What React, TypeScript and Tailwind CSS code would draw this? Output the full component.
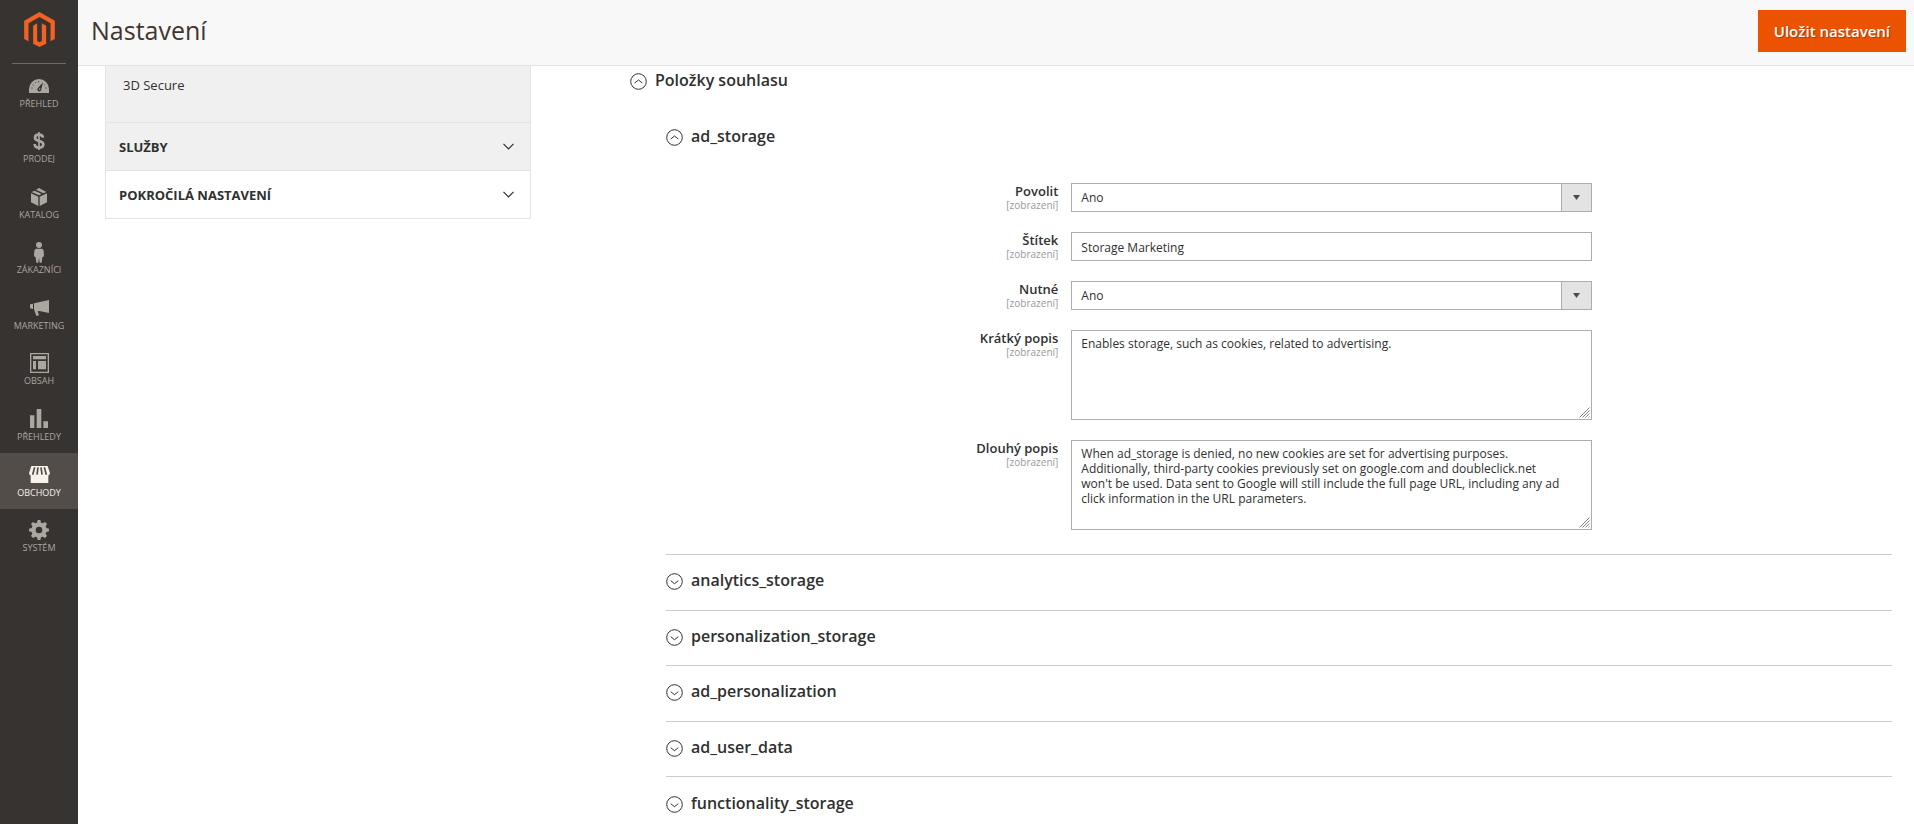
import React from "react";
import clsx from "clsx";

type MenuItem = {
  label: string;
  icon: React.ReactNode;
  active?: boolean;
};

const menu: MenuItem[] = [
  { label: "PŘEHLED", icon: <DashboardIcon /> },
  { label: "PRODEJ", icon: <DollarIcon /> },
  { label: "KATALOG", icon: <BoxIcon /> },
  { label: "ZÁKAZNÍCI", icon: <PersonIcon /> },
  { label: "MARKETING", icon: <MegaphoneIcon /> },
  { label: "OBSAH", icon: <LayoutIcon /> },
  { label: "PŘEHLEDY", icon: <BarsIcon /> },
  { label: "OBCHODY", icon: <StoreIcon />, active: true },
  { label: "SYSTÉM", icon: <GearIcon /> },
];

const closedSections = [
  "analytics_storage",
  "personalization_storage",
  "ad_personalization",
  "ad_user_data",
  "functionality_storage",
];

const longText = `When ad_storage is denied, no new cookies are set for advertising purposes.
Additionally, third-party cookies previously set on google.com and doubleclick.net
won't be used. Data sent to Google will still include the full page URL, including any ad
click information in the URL parameters.`;

const App = () => {
  return (
    <div className="flex h-screen overflow-hidden bg-white font-['Open_Sans',sans-serif] text-[#303030]">
      <Sidebar />
      <div className="flex min-w-0 flex-1 flex-col">
        <header className="flex h-[66px] shrink-0 items-center justify-between border-b border-[#e3e3e3] bg-[#f8f8f8] pr-2 pl-[13px]">
          <h1 className="pb-[6px] text-[25px] leading-8 text-[#41362f]">
            Nastavení
          </h1>
          <button
            type="button"
            className="mb-[3px] h-[42px] bg-[#eb5202] px-4 text-[15px] font-semibold text-white [text-shadow:1px_1px_0_rgba(0,0,0,0.25)]"
          >
            Uložit nastavení
          </button>
        </header>
        <div className="flex flex-1 items-start overflow-hidden pr-[22px] pl-[27px]">
          <ConfigNav />
          <Settings />
        </div>
      </div>
    </div>
  );
};

export default App;

const Sidebar = () => {
  return (
    <aside className="w-[78px] shrink-0 bg-[#373330]">
      <a
        href="#"
        aria-label="Magento"
        className="mx-3 flex h-16 justify-center border-b border-[#736963] pt-3"
      >
        <MagentoLogo />
      </a>
      <nav>
        <ul className="flex h-[500px] flex-col text-[9px] leading-3">
          {menu.map((item) => (
            <li key={item.label} className="flex-1">
              <a
                href="#"
                className={clsx(
                  "flex h-full flex-col items-center justify-end pb-[10px]",
                  item.active
                    ? "bg-[#524d49] text-[#f7f3eb]"
                    : "text-[#aaa6a0]"
                )}
              >
                <span className="flex h-6 items-center">{item.icon}</span>
                <span>{item.label}</span>
              </a>
            </li>
          ))}
        </ul>
      </nav>
    </aside>
  );
};

const ConfigNav = () => {
  return (
    <nav className="w-[426px] shrink-0 border-x border-b border-[#e3e3e3] text-[13px] leading-5">
      <div className="h-14 bg-[#f0f0f0] pt-[9px] pl-[17px]">
        <a href="#">3D Secure</a>
      </div>
      <NavGroup label="SLUŽBY" className="bg-[#f0f0f0]" />
      <NavGroup label="POKROČILÁ NASTAVENÍ" />
    </nav>
  );
};

const NavGroup = ({
  label,
  className,
}: {
  label: string;
  className?: string;
}) => {
  return (
    <button
      type="button"
      className={clsx(
        "flex h-12 w-full items-center justify-between border-t border-[#e3e3e3] pr-4 pl-[13px] font-bold",
        className
      )}
    >
      {label}
      <svg width="11" height="7" viewBox="0 0 11 7" fill="none">
        <path d="M.5 .8 5.5 5.8 10.5 .8" stroke="#303030" strokeWidth="1.2" />
      </svg>
    </button>
  );
};

const Settings = () => {
  return (
    <main className="ml-[99px] min-w-0 flex-1">
      <SectionTitle label="Položky souhlasu" open className="h-8" />
      <div className="pl-9">
        <SectionTitle label="ad_storage" open className="mt-6 h-8" />
        <form className="mt-[29px] mb-6 flex flex-col gap-5">
          <Field id="enabled" label="Povolit">
            <Select id="enabled" />
          </Field>
          <Field id="label" label="Štítek">
            <input
              id="label"
              type="text"
              defaultValue="Storage Marketing"
              className="block h-[29px] w-full border border-[#adadad] px-[9px] pt-px outline-none"
            />
          </Field>
          <Field id="required" label="Nutné">
            <Select id="required" />
          </Field>
          <Field id="short" label="Krátký popis">
            <TextArea
              id="short"
              text="Enables storage, such as cookies, related to advertising."
            />
          </Field>
          <Field id="long" label="Dlouhý popis">
            <TextArea id="long" text={longText} />
          </Field>
        </form>
        <div className="flex h-[278px] flex-col">
          {closedSections.map((label) => (
            <SectionTitle
              key={label}
              label={label}
              className="flex-1 border-t border-[#cccccc]"
            />
          ))}
        </div>
      </div>
    </main>
  );
};

const SectionTitle = ({
  label,
  open,
  className,
}: {
  label: string;
  open?: boolean;
  className?: string;
}) => {
  return (
    <h2 className={className}>
      <button
        type="button"
        aria-expanded={!!open}
        className="flex h-full w-full items-center gap-2 pb-1 text-base font-semibold"
      >
        <svg
          width="17"
          height="17"
          viewBox="0 0 17 17"
          fill="none"
          stroke="#303030"
          className="mt-[3px]"
        >
          <circle cx="8.5" cy="8.5" r="7.8" />
          <path
            d={open ? "M4.7 10 8.5 7 12.3 10" : "M4.7 7.7 8.5 10.7 12.3 7.7"}
          />
        </svg>
        {label}
      </button>
    </h2>
  );
};

const Field = ({
  id,
  label,
  children,
}: {
  id: string;
  label: string;
  children: React.ReactNode;
}) => {
  return (
    <div className="flex items-start">
      <label
        htmlFor={id}
        className="w-[32%] shrink-0 text-right text-[13px] leading-4 font-semibold"
      >
        {label}
        <span className="block text-[10px] leading-3 font-normal text-[#999999]">
          [zobrazení]
        </span>
      </label>
      <div className="relative ml-[13px] w-[42.5%] text-xs">{children}</div>
    </div>
  );
};

const Select = ({ id }: { id: string }) => {
  return (
    <>
      <select
        id={id}
        defaultValue="1"
        className="block h-[29px] w-full appearance-none border border-[#adadad] bg-white px-[9px] pt-px outline-none"
      >
        <option value="1">Ano</option>
        <option value="0">Ne</option>
      </select>
      <span className="pointer-events-none absolute inset-y-0 right-0 flex w-[31px] items-center justify-center border border-[#adadad] bg-[#e3e3e3]">
        <svg width="7" height="5" viewBox="0 0 7 5" fill="#514943">
          <path d="M0 0H7L3.5 5Z" />
        </svg>
      </span>
    </>
  );
};

const TextArea = ({ id, text }: { id: string; text: string }) => {
  return (
    <>
      <textarea
        id={id}
        defaultValue={text}
        className="block h-[90px] w-full resize-none overflow-hidden border border-[#adadad] px-[9px] py-[5px] leading-[15px] outline-none"
      />
      <svg
        width="11"
        height="11"
        viewBox="0 0 11 11"
        stroke="#808080"
        strokeWidth="1"
        className="pointer-events-none absolute right-[2px] bottom-[2px]"
      >
        <path d="M.5 10.5 10.5 .5M3.5 10.5 10.5 3.5M6.5 10.5 10.5 6.5M9.5 10.5 10.5 9.5" />
      </svg>
    </>
  );
};

function MagentoLogo() {
  return (
    <svg width="31" height="35" viewBox="0 0 92 105" fill="#f26322">
      <path d="M46 0 92 26V81L79 88V34L46 15 13 34V88L0 81V26Z" />
      <path d="M27 41 39 34V87L46 91 53 87V34L66 41V95L46 105 27 95Z" />
    </svg>
  );
}

function DashboardIcon() {
  return (
    <svg width="20" height="14" viewBox="0 0 60 42" fill="none">
      <path d="M0 42V30a30 30 0 0 1 60 0V42Z" fill="#aaa6a0" />
      <path
        d="M7 27h4M11 17l3 2M19 9l2 3M29 6v4M49 27h4M48 17l-2 1"
        stroke="#373330"
        strokeWidth="2.5"
      />
      <path d="M42 10 37 31a6 6 0 1 1-10-4Z" fill="#373330" />
      <circle cx="32" cy="30" r="2.5" fill="#aaa6a0" />
    </svg>
  );
}

function DollarIcon() {
  return (
    <svg width="12" height="18" viewBox="0 0 34 54" fill="none" stroke="#aaa6a0">
      <path
        d="M29 17C28 10 23 8 17 8 10 8 5 11 5 17c0 13 25 7 25 20 0 7-6 10-13 10S4 44 4 36"
        strokeWidth="8"
      />
      <path d="M17 0V54" strokeWidth="5" />
    </svg>
  );
}

function BoxIcon() {
  return (
    <svg width="16" height="18" viewBox="0 0 48 54" fill="#aaa6a0">
      <path d="M0 16 22 26V54L0 43ZM48 16V43L26 54V26Z" />
      <path d="M2 12 11 8 32 18 24 22ZM15 5 24 0 46 12 37 16Z" />
    </svg>
  );
}

function PersonIcon() {
  return (
    <svg width="10" height="21" viewBox="0 0 30 63" fill="#aaa6a0">
      <circle cx="15" cy="9" r="9" />
      <path d="M7 20H23Q28 20 29 27L30 43 25 46 23 62H17L15 47 13 62H7L5 46 0 43 1 27Q2 20 7 20Z" />
    </svg>
  );
}

function MegaphoneIcon() {
  return (
    <svg width="19" height="16" viewBox="0 0 57 48" fill="#aaa6a0">
      <path d="M0 13 9 11V27L0 25ZM12 10 57 0V39L28 33 23 34 27 46 19 48 12 28Z" />
    </svg>
  );
}

function LayoutIcon() {
  return (
    <svg width="19" height="20" viewBox="0 0 57 60" fill="#aaa6a0">
      <path d="M0 0H57V60H0ZM4 4V56H53V4Z" fillRule="evenodd" />
      <path d="M9 9H48V19H9ZM9 24H18V49H9ZM24 24H48V49H24Z" />
    </svg>
  );
}

function BarsIcon() {
  return (
    <svg width="18" height="19" viewBox="0 0 54 57" fill="#aaa6a0">
      <path d="M0 19H13V57H0ZM20 0H34V57H20ZM40 37H54V57H40Z" />
    </svg>
  );
}

function StoreIcon() {
  return (
    <svg width="21" height="17" viewBox="0 0 63 51" fill="#f7f3eb">
      <path d="M5 27H58V51H5Z" />
      <path d="M7 0H56L63 22Q62 29 56 28H7Q1 29 0 22Z" />
      <path
        d="M17 4 11 26M27 4 24 26M36 4 39 26M46 4 52 26"
        stroke="#524d49"
        strokeWidth="5"
      />
    </svg>
  );
}

function GearIcon() {
  return (
    <svg width="20" height="20" viewBox="0 0 60 60" fill="#aaa6a0">
      <path
        fillRule="evenodd"
        d="M26 0h8l2 8 5 2 7-4 6 6-4 7 2 5 8 2v8l-8 2-2 5 4 7-6 6-7-4-5 2-2 8h-8l-2-8-5-2-7 4-6-6 4-7-2-5-8-2v-8l8-2 2-5-4-7 6-6 7 4 5-2ZM30 20a10 10 0 1 0 0 20a10 10 0 0 0 0-20Z"
      />
    </svg>
  );
}
